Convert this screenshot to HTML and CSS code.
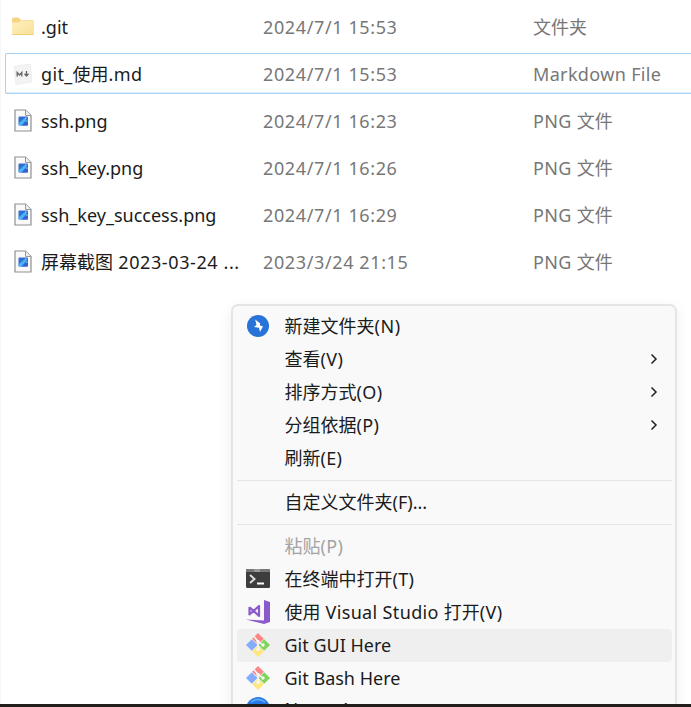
FILE: index.html
```html
<!DOCTYPE html>
<html lang="zh-CN">
<head>
<meta charset="utf-8">
<title>文件</title>
<link rel="stylesheet" href="styles.css">
</head>
<body>
<svg width="0" height="0" class="defs">
  <defs>
    <linearGradient id="fold" x1="0" y1="0" x2="1" y2="1"><stop offset="0" stop-color="#fff0bd"/><stop offset="1" stop-color="#f9e09a"/></linearGradient>
    <symbol id="png" viewBox="0 0 18 23">
      <path d="M1 1h10.500l5.500 5.500v15.500h-16z" fill="#fafafa" stroke="#8f8f8f" stroke-width="1.200"/>
      <path d="M11.500 1v5.500h5.500" fill="#eee" stroke="#9a9a9a" stroke-width="1"/>
      <rect x="4.500" y="7.500" width="9.500" height="9" rx="1" fill="#2f6fd6"/>
      <path d="M4.500 14.500L9.500 10q1-.8 2 0l2.500 2.500-5.500 4h-3q-1 0-1-1z" fill="#49b4f4"/>
      <path d="M7.500 16.500l4-4.500 2.500 2.500v1q0 1-1 1z" fill="#3a5fd0"/>
      <circle cx="11.800" cy="9.300" r=".8" fill="#bfe5ff"/>
    </symbol>
    <symbol id="git" viewBox="0 0 24 24">
      <path d="M12 0L17.800 5.800 12 11.600 6.200 5.800z" fill="#fc8585"/>
      <path d="M5.800 6.200L11.600 12 5.800 17.800 0 12z" fill="#85abfb"/>
      <path d="M18.200 6.200L24 12 18.200 17.800 12.400 12z" fill="#80d45b"/>
      <path d="M12 12.400L17.800 18.200 12 24 6.200 18.200z" fill="#fee681"/>
      <path d="M8 3.500l4 5v8M12 8.500l5 3.500" fill="none" stroke="#f8f8f8" stroke-width="1.500"/>
      <circle cx="12" cy="8.500" r="1.700" fill="#f8f8f8"/><circle cx="12" cy="16.500" r="1.700" fill="#f8f8f8"/><circle cx="17" cy="12" r="1.700" fill="#f8f8f8"/>
    </symbol>
    <symbol id="chev" viewBox="0 0 8 12"><path d="M1.500 1.500L6 6l-4.500 4.500" fill="none" stroke="#222" stroke-width="1.500"/></symbol>
  </defs>
</svg>
<main class="window">
  <div class="files">
    <div class="row"><span class="ficon"><svg width="24" height="19" viewBox="0 0 24 19"><path d="M1 2q0-1.500 1.500-1.500h5l2.500 2.500h11.500q1.500 0 1.500 1.500v3h-22z" fill="#f5d582"/><path d="M1 5.500h7l2-2h12q1 0 1 1v12q0 1.500-1.500 1.500h-19q-1.500 0-1.500-1.500z" fill="url(#fold)"/><path d="M1.500 17.500h21" stroke="#efcf76"/></svg></span><span class="name"><i>.git</i></span><span class="date">2024/7/1 15:53</span><span class="type">文件夹</span></div>
    <div class="row selected"><span class="ficon"><svg width="24" height="24" viewBox="0 0 24 24"><path d="M3 4.500L19 2l2 18-16 2.500z" fill="#f3f3f3" stroke="#eaeaea" stroke-width=".7"/><path d="M6.200 14.500V10.500l2.300 2.500 2.300-2.500v4M15.500 9v4.800M13.500 11.800l2 2.200 2-2.200" fill="none" stroke="#666" stroke-width="1.300"/></svg></span><span class="name"><i class="wide">git_</i>使用<i class="wide">.md</i></span><span class="date">2024/7/1 15:53</span><span class="type"><i class="wide">Markdown File</i></span></div>
    <div class="row"><span class="ficon"><svg width="18" height="23"><use href="#png"/></svg></span><span class="name"><i>ssh.png</i></span><span class="date">2024/7/1 16:23</span><span class="type"><i class="wide">PNG </i>文件</span></div>
    <div class="row"><span class="ficon"><svg width="18" height="23"><use href="#png"/></svg></span><span class="name"><i>ssh_key.png</i></span><span class="date">2024/7/1 16:26</span><span class="type"><i class="wide">PNG </i>文件</span></div>
    <div class="row"><span class="ficon"><svg width="18" height="23"><use href="#png"/></svg></span><span class="name"><i>ssh_key_success.png</i></span><span class="date">2024/7/1 16:29</span><span class="type"><i class="wide">PNG </i>文件</span></div>
    <div class="row"><span class="ficon"><svg width="18" height="23"><use href="#png"/></svg></span><span class="name">屏幕截图<i class="wider"> 2023-03-24 ...</i></span><span class="date">2023/3/24 21:15</span><span class="type"><i class="wide">PNG </i>文件</span></div>
  </div>
  <div class="menu">
    <div class="item"><span class="micon"><svg width="22" height="22" viewBox="0 0 22 22"><circle cx="11" cy="11" r="11" fill="#2873d8"/><path d="M8.200 4.500L13 8.300v2.200l3 .8-3 5.700-1-4.200-5-.8 2.500-2z" fill="#fff"/></svg></span><span>新建文件夹<i class="wider">(N)</i></span></div>
    <div class="item"><span class="micon"></span><span>查看<i class="wide">(V)</i></span><svg class="arrow" width="8" height="12"><use href="#chev"/></svg></div>
    <div class="item"><span class="micon"></span><span>排序方式<i class="wide">(O)</i></span><svg class="arrow" width="8" height="12"><use href="#chev"/></svg></div>
    <div class="item"><span class="micon"></span><span>分组依据<i class="wide">(P)</i></span><svg class="arrow" width="8" height="12"><use href="#chev"/></svg></div>
    <div class="item"><span class="micon"></span><span>刷新<i class="wide">(E)</i></span></div>
    <div class="sep"></div>
    <div class="item"><span class="micon"></span><span>自定义文件夹<i>(F)...</i></span></div>
    <div class="sep"></div>
    <div class="item disabled"><span class="micon"></span><span>粘贴<i class="wide">(P)</i></span></div>
    <div class="item"><span class="micon"><svg width="24" height="19" viewBox="0 0 24 19"><rect width="24" height="19" rx="1.500" fill="#3d3d3d"/><path d="M1 0h22q1 0 1 1v2H0V1q0-1 1-1z" fill="#777"/><path d="M8 0h6v3H8z" fill="#999"/><path d="M4 6l4.500 4L4 14" fill="none" stroke="#ddd" stroke-width="2"/><path d="M11 14.500h7" stroke="#fff" stroke-width="2"/></svg></span><span>在终端中打开<i class="wide">(T)</i></span></div>
    <div class="item"><span class="micon"><svg width="24" height="24" viewBox="0 0 24 24"><path d="M18 0l6 2v20l-6 2L0 19.500l18 1z" fill="#8b5bcb"/><path d="M3.500 7v7.500L13 6v10L3.500 7.200" fill="none" stroke="#8b5bcb" stroke-width="2.200" stroke-linejoin="round"/></svg></span><span>使用<i class="wide"> Visual Studio </i>打开<i class="wide">(V)</i></span></div>
    <div class="item hover"><span class="micon"><svg width="24" height="24"><use href="#git"/></svg></span><span><i>Git GUI Here</i></span></div>
    <div class="item"><span class="micon"><svg width="24" height="24"><use href="#git"/></svg></span><span><i>Git Bash Here</i></span></div>
    <div class="item last"><span class="micon"><svg width="24" height="24" viewBox="0 0 24 24"><circle cx="12" cy="12" r="12" fill="#2878e8"/><path d="M5 5q7-5 14 0" fill="none" stroke="#5aa5f5" stroke-width="2"/></svg></span><span><i>Name A</i></span></div>
  </div>
</main>
<div class="bar"></div>
</body>
</html>
```
FILE: styles.css
```css
* { box-sizing: border-box; }
body { margin: 0; width: 691px; height: 707px; overflow: hidden; background: #fff; color: #1b1b1b; font: 18px/24px "Noto Sans", "Noto Sans CJK SC", sans-serif; display: flex; flex-direction: column; }
i { font-style: normal; white-space: pre; }
svg { display: block; }
.defs { position: absolute; }
.window { height: 704px; flex: none; overflow: hidden; border-left: 1px solid #f7f7f7; }
.wide { letter-spacing: .35px; }
.wider { letter-spacing: .6px; }
.files { display: flex; flex-direction: column; gap: 6px; padding-top: 6px; }
.row { height: 41px; margin-left: 4px; padding-top: 1px; border: 1px solid transparent; border-right: 0; display: grid; grid-template-columns: 35px 222px 270px 1fr; align-items: center; white-space: nowrap; }
.selected { border-color: #a9d3f5; border-radius: 2px 0 0 2px; box-shadow: inset 0 -1px #d9edfc; }
.ficon { width: 33px; padding-bottom: 1px; display: flex; justify-content: center; }
.date, .type { color: #777; }
.date { letter-spacing: .62px; }
.menu { width: 446px; height: 430px; margin: 22px 0 0 230px; padding: 4px 3px 4px 4px; border: 2px solid #e5e5e5; border-radius: 7px; background: #f9f9f9; box-shadow: 0 4px 14px rgba(0,0,0,.07); }
.item { height: 33px; padding-bottom: 2px; display: flex; align-items: center; border-radius: 4px; white-space: nowrap; }
.last { padding-bottom: 5px; }
.micon { width: 42px; margin-right: 5.500px; display: flex; justify-content: center; }
.arrow { margin-left: auto; margin-right: 14px; }
.sep { height: 1px; background: #e5e5e5; margin: 5px 0; }
.hover { background: #efefef; }
.disabled { color: #a3a3a3; }
.bar { height: 3px; flex: none; background: #211e1b; }
```
